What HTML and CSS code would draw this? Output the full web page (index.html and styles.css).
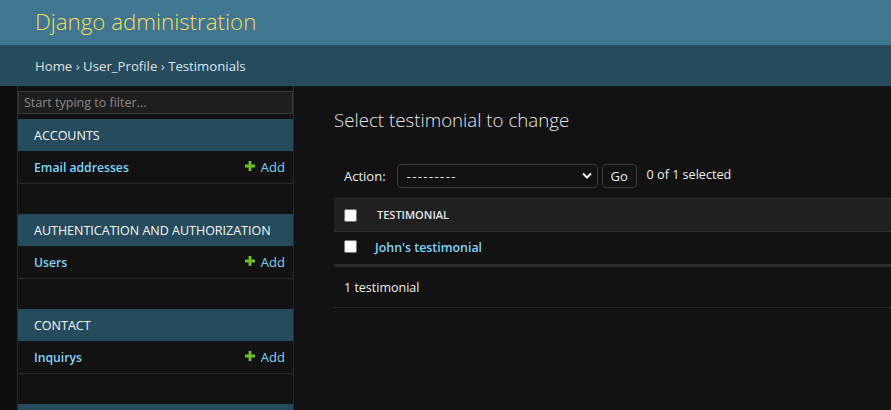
FILE: index.html
```html
<!DOCTYPE html>
<html lang="en">
<head>
<meta charset="utf-8">
<title>Select testimonial to change</title>
<link rel="stylesheet" href="styles.css">
</head>
<body>
<header class="header"><div class="branding">Django administration</div></header>
<nav class="breadcrumbs"><a class="crumb">Home</a> › <a class="crumb">User_Profile</a> › <span class="current">Testimonials</span></nav>
<div class="main">
  <div class="toggle"></div>
  <aside class="sidebar">
    <input class="filter" type="text" placeholder="Start typing to filter...">
    <div class="module">
      <div class="caption">Accounts</div>
      <div class="row"><a class="model">Email addresses</a><a class="add"><svg class="plus" viewBox="0 0 10 10" width="10" height="10"><path d="M3.6 0h2.8v3.6H10v2.8H6.4V10H3.6V6.4H0V3.6h3.6z" fill="#70bf2b"/></svg>Add</a></div>
    </div>
    <div class="module">
      <div class="caption">Authentication and Authorization</div>
      <div class="row"><a class="model">Users</a><a class="add"><svg class="plus" viewBox="0 0 10 10" width="10" height="10"><path d="M3.6 0h2.8v3.6H10v2.8H6.4V10H3.6V6.4H0V3.6h3.6z" fill="#70bf2b"/></svg>Add</a></div>
    </div>
    <div class="module">
      <div class="caption">Contact</div>
      <div class="row"><a class="model">Inquirys</a><a class="add"><svg class="plus" viewBox="0 0 10 10" width="10" height="10"><path d="M3.6 0h2.8v3.6H10v2.8H6.4V10H3.6V6.4H0V3.6h3.6z" fill="#70bf2b"/></svg>Add</a></div>
    </div>
    <div class="module">
      <div class="caption">&nbsp;</div>
    </div>
  </aside>
  <section class="content">
    <h1 class="title">Select testimonial to change</h1>
    <div class="actions">
      <span class="action-label">Action:</span>
      <div class="select"><span class="dashes">---------</span><svg class="chev" viewBox="0 0 10 8" width="10" height="8"><path d="M1 1.5l4 4 4-4" fill="none" stroke="#eeeeee" stroke-width="2"/></svg></div>
      <button class="go" type="button">Go</button>
      <span class="counter">0 of 1 selected</span>
    </div>
    <div class="table">
      <div class="thead"><input class="check" type="checkbox"><span class="th">Testimonial</span></div>
      <div class="trow"><input class="check" type="checkbox"><a class="obj">John's testimonial</a></div>
    </div>
    <p class="paginator">1 testimonial</p>
  </section>
</div>
</body>
</html>
```
FILE: styles.css
```css
html, body {
  margin: 0;
  padding: 0;
  background: #121212;
  color: #eeeeee;
  font-family: "Open Sans", "Noto Sans", sans-serif;
  font-size: 13px;
  overflow: hidden;
  height: 410px;
}
.header {
  height: 45px;
  background: #417690;
  display: flex;
  align-items: center;
  padding-left: 35px;
}
.branding {
  font-size: 22.3px;
  font-weight: 300;
  color: #f5dd5d;
  line-height: 28px;
  margin-top: -2px;
}
.breadcrumbs {
  height: 41px;
  background: #264b5d;
  display: flex;
  align-items: center;
  padding-left: 35px;
  font-size: 13.2px;
  color: #c4dce8;
  white-space: pre;
}
.crumb { color: #e0e0e0; }
.current { color: #d8e8f0; }
.main {
  display: flex;
  align-items: flex-start;
  height: 324px;
  overflow: hidden;
}
.toggle {
  width: 17px;
  height: 324px;
  background: #0e0e0e;
  border-right: 1px solid #2a2a2a;
  flex: none;
}
.sidebar {
  width: 275px;
  flex: none;
  border-right: 1px solid #2a2a2a;
  height: 324px;
  overflow: hidden;
}
.filter {
  display: block;
  box-sizing: border-box;
  width: 100%;
  height: 23px;
  margin: 5px 0 5px;
  background: #1e1e1e;
  border: 1px solid #3a3a3a;
  color: #eeeeee;
  font-family: inherit;
  font-size: 12.5px;
  padding: 0 5px;
  outline: none;
}
.filter::placeholder { color: #8a8a8a; }
.module { margin-bottom: 30px; }
.caption {
  height: 32px;
  background: #264b5d;
  color: #f7f7f7;
  text-transform: uppercase;
  display: flex;
  align-items: center;
  padding-left: 16px;
  font-size: 12.5px;
}
.row {
  height: 32px;
  display: flex;
  align-items: center;
  justify-content: space-between;
  padding: 0 8px 0 16px;
  border-bottom: 1px solid #2a2a2a;
}
.model {
  color: #81d4fa;
  font-weight: 600;
  font-size: 12.2px;
}
.add {
  color: #81d4fa;
  font-size: 13px;
  display: flex;
  align-items: center;
}
.plus { margin-right: 6px; margin-top: -3px; }
.content {
  flex: 1;
  padding: 20px 0 0 40px;
  min-width: 0;
}
.title {
  margin: 0 0 20px;
  font-size: 18.7px;
  line-height: 28px;
  font-weight: 300;
  color: #e6e6e6;
}
.actions {
  height: 44px;
  box-sizing: border-box;
  padding: 0 10px;
  display: flex;
  align-items: center;
}
.action-label { margin-right: 11px; font-size: 13px; }
.select {
  box-sizing: border-box;
  width: 201px;
  height: 24px;
  border: 1px solid #3a3a3a;
  border-radius: 4px;
  display: flex;
  align-items: center;
  justify-content: space-between;
  padding: 0 5px 0 9px;
  font-size: 13px;
}
.dashes { letter-spacing: 1.4px; }
.go {
  box-sizing: border-box;
  margin-left: 4px;
  width: 35px;
  height: 24px;
  background: #121212;
  border: 1px solid #3a3a3a;
  border-radius: 4px;
  color: #eeeeee;
  font-family: inherit;
  font-size: 13px;
  padding: 0;
}
.counter { margin-left: 10px; margin-top: -3px; font-size: 12.6px; }
.table { width: 100%; }
.thead {
  height: 32px;
  background: #202020;
  border-top: 1px solid #2e2e2e;
  border-bottom: 1px solid #2e2e2e;
  display: flex;
  align-items: center;
  padding-left: 10px;
}
.check {
  width: 13px;
  height: 13px;
  margin: 0 20px 0 0;
  flex: none;
}
.th {
  font-size: 11px;
  font-weight: 600;
  text-transform: uppercase;
  color: #e6e6e6;
  margin-top: -1px;
}
.trow {
  height: 32px;
  display: flex;
  align-items: center;
  padding-left: 10px;
  border-bottom: 1px solid #2e2e2e;
}
.trow .check { margin-right: 18px; margin-top: -4px; }
.obj {
  color: #81d4fa;
  font-weight: 600;
  font-size: 12.4px;
  margin-top: -2px;
}
.paginator {
  margin: 0;
  height: 43px;
  box-sizing: border-box;
  border-top: 2px solid #2a2a2a;
  border-bottom: 1px solid #2a2a2a;
  display: flex;
  align-items: center;
  padding-left: 10px;
  font-size: 12.5px;
}
```
